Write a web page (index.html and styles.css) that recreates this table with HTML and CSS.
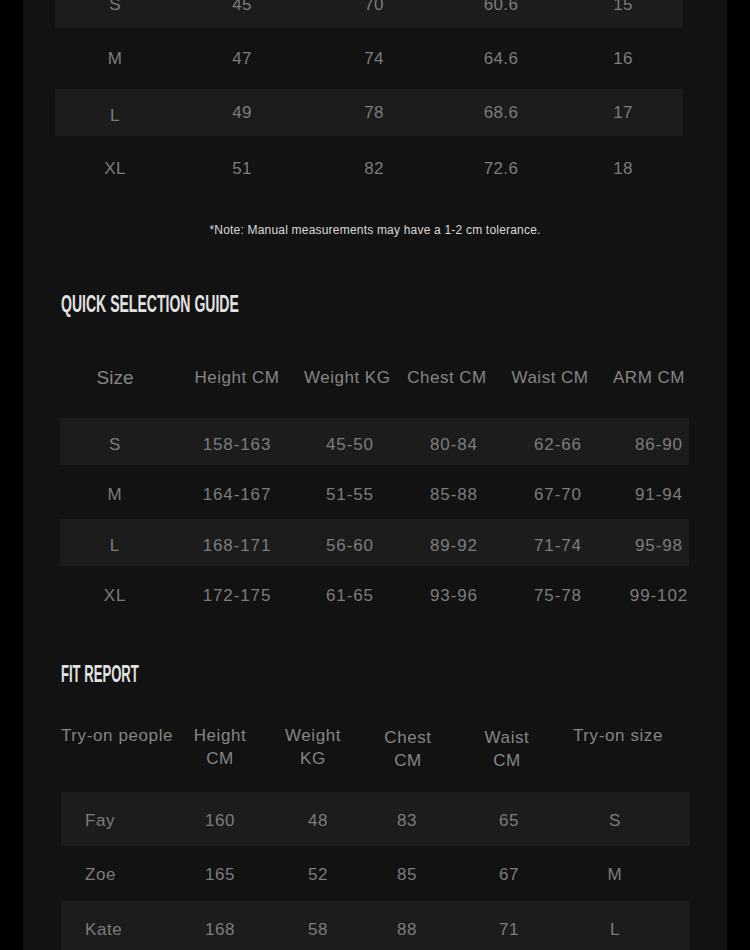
FILE: index.html
```html
<!DOCTYPE html>
<html lang="en">
<head>
<meta charset="utf-8">
<title>Size Guide</title>
<link rel="stylesheet" href="styles.css">
</head>
<body>
<div class="panel">
  <div class="measure">
    <div class="mrow stripe"><span>S</span><span>45</span><span>70</span><span>60.6</span><span>15</span></div>
    <div class="mrow"><span>M</span><span>47</span><span>74</span><span>64.6</span><span>16</span></div>
    <div class="mrow stripe"><span class="low">L</span><span>49</span><span>78</span><span>68.6</span><span>17</span></div>
    <div class="mrow"><span class="down">XL</span><span class="down">51</span><span class="down">82</span><span class="down">72.6</span><span class="down">18</span></div>
  </div>
  <p class="note">*Note: Manual measurements may have a 1-2 cm tolerance.</p>

  <h2 class="title quick-title"><span>QUICK SELECTION GUIDE</span></h2>
  <div class="quick">
    <div class="qhead"><span class="size-h">Size</span><span>Height CM</span><span>Weight KG</span><span>Chest CM</span><span>Waist CM</span><span>ARM CM</span></div>
    <div class="qrows">
      <div class="qrow stripe"><span>S</span><span>158-163</span><span>45-50</span><span>80-84</span><span>62-66</span><span>86-90</span></div>
      <div class="qrow"><span>M</span><span>164-167</span><span>51-55</span><span>85-88</span><span>67-70</span><span>91-94</span></div>
      <div class="qrow stripe"><span>L</span><span>168-171</span><span>56-60</span><span>89-92</span><span>71-74</span><span>95-98</span></div>
      <div class="qrow"><span>XL</span><span>172-175</span><span>61-65</span><span>93-96</span><span>75-78</span><span>99-102</span></div>
    </div>
  </div>

  <h2 class="title fit-title"><span>FIT REPORT</span></h2>
  <div class="fit">
    <div class="fhead">
      <span class="people">Try-on people</span>
      <span>Height<br>CM</span>
      <span>Weight<br>KG</span>
      <span class="lower">Chest<br>CM</span>
      <span class="lower">Waist<br>CM</span>
      <span>Try-on size</span>
    </div>
    <div class="frow stripe"><span class="name">Fay</span><span>160</span><span>48</span><span>83</span><span>65</span><span>S</span></div>
    <div class="frow"><span class="name">Zoe</span><span>165</span><span>52</span><span>85</span><span>67</span><span>M</span></div>
    <div class="frow stripe"><span class="name">Kate</span><span>168</span><span>58</span><span>88</span><span>71</span><span>L</span></div>
  </div>
</div>
</body>
</html>
```
FILE: styles.css
```css
html, body {
  margin: 0;
  padding: 0;
  background: #000;
}
body {
  font-family: "Liberation Sans", Arial, sans-serif;
  color: #7c7c7c;
  overflow: hidden;
}
.panel {
  width: 704px;
  margin-left: 23px;
  min-height: 950px;
  background: #121212;
  overflow: hidden;
}
.stripe {
  background: #1c1c1c;
}

/* top measurement table */
.measure {
  margin: -19px 0 0 32px;
  width: 628px;
  display: flex;
  flex-direction: column;
  gap: 7px;
}
.mrow {
  height: 47px;
  display: grid;
  grid-template-columns: 120px 134px 130px 124px 120px;
  align-items: center;
  font-size: 17px;
  letter-spacing: 0.4px;
}
.mrow span {
  text-align: center;
}
.mrow .low {
  padding-top: 7px;
}
.mrow .down {
  padding-top: 5px;
}
.note {
  margin: 33px 0 0;
  text-align: center;
  font-size: 12px;
  letter-spacing: 0.2px;
  color: #d9d9d9;
  line-height: 14px;
}

/* headings */
.title {
  margin: 0;
  height: 24px;
  line-height: 24px;
  font-size: 24px;
  font-weight: bold;
  color: #e2e2e2;
  white-space: nowrap;
}
.title span {
  display: inline-block;
  transform-origin: left center;
  transform: scaleX(0.585);
}
.quick-title {
  margin: 55px 0 0 38px;
}
.fit-title {
  margin: 45px 0 0 38px;
}
.fit-title span {
  transform: scaleX(0.545);
}

/* quick selection table */
.quick {
  margin: 42px 0 0 37px;
  width: 629px;
}
.qhead {
  height: 40px;
  display: grid;
  grid-template-columns: 110px 134px 84px 118px 88px 110px;
  align-items: center;
  font-size: 17px;
  letter-spacing: 0.5px;
  color: #858585;
  white-space: nowrap;
}
.qhead span {
  text-align: center;
}
.qhead .size-h {
  font-size: 19px;
  letter-spacing: 0;
}
.qrows {
  margin-top: 20px;
  display: flex;
  flex-direction: column;
  gap: 3.5px;
}
.qrow {
  height: 47px;
  display: grid;
  grid-template-columns: 110px 134px 92px 116px 92px 110px;
  align-items: center;
  font-size: 17px;
  letter-spacing: 0.9px;
  white-space: nowrap;
}
.qrow span {
  text-align: center;
  padding-top: 6px;
}

/* fit report */
.fit {
  margin: 38px 0 0 38px;
  width: 629px;
}
.fhead {
  display: grid;
  grid-template-columns: 110px 98px 88px 102px 96px 126px;
  font-size: 17px;
  line-height: 23px;
  letter-spacing: 0.6px;
  color: #858585;
  white-space: nowrap;
  margin-top: 3px;
  margin-bottom: 20px;
}
.fhead span {
  text-align: center;
}
.fhead .people {
  text-align: left;
}
.fhead .lower {
  padding-top: 2px;
}
.frow {
  height: 54.5px;
  display: grid;
  grid-template-columns: 110px 98px 98px 80px 124px 88px;
  align-items: center;
  font-size: 17px;
  letter-spacing: 0.6px;
}
.frow span {
  text-align: center;
  padding-top: 4px;
}
.frow .name {
  text-align: left;
  padding-left: 24px;
}
```
